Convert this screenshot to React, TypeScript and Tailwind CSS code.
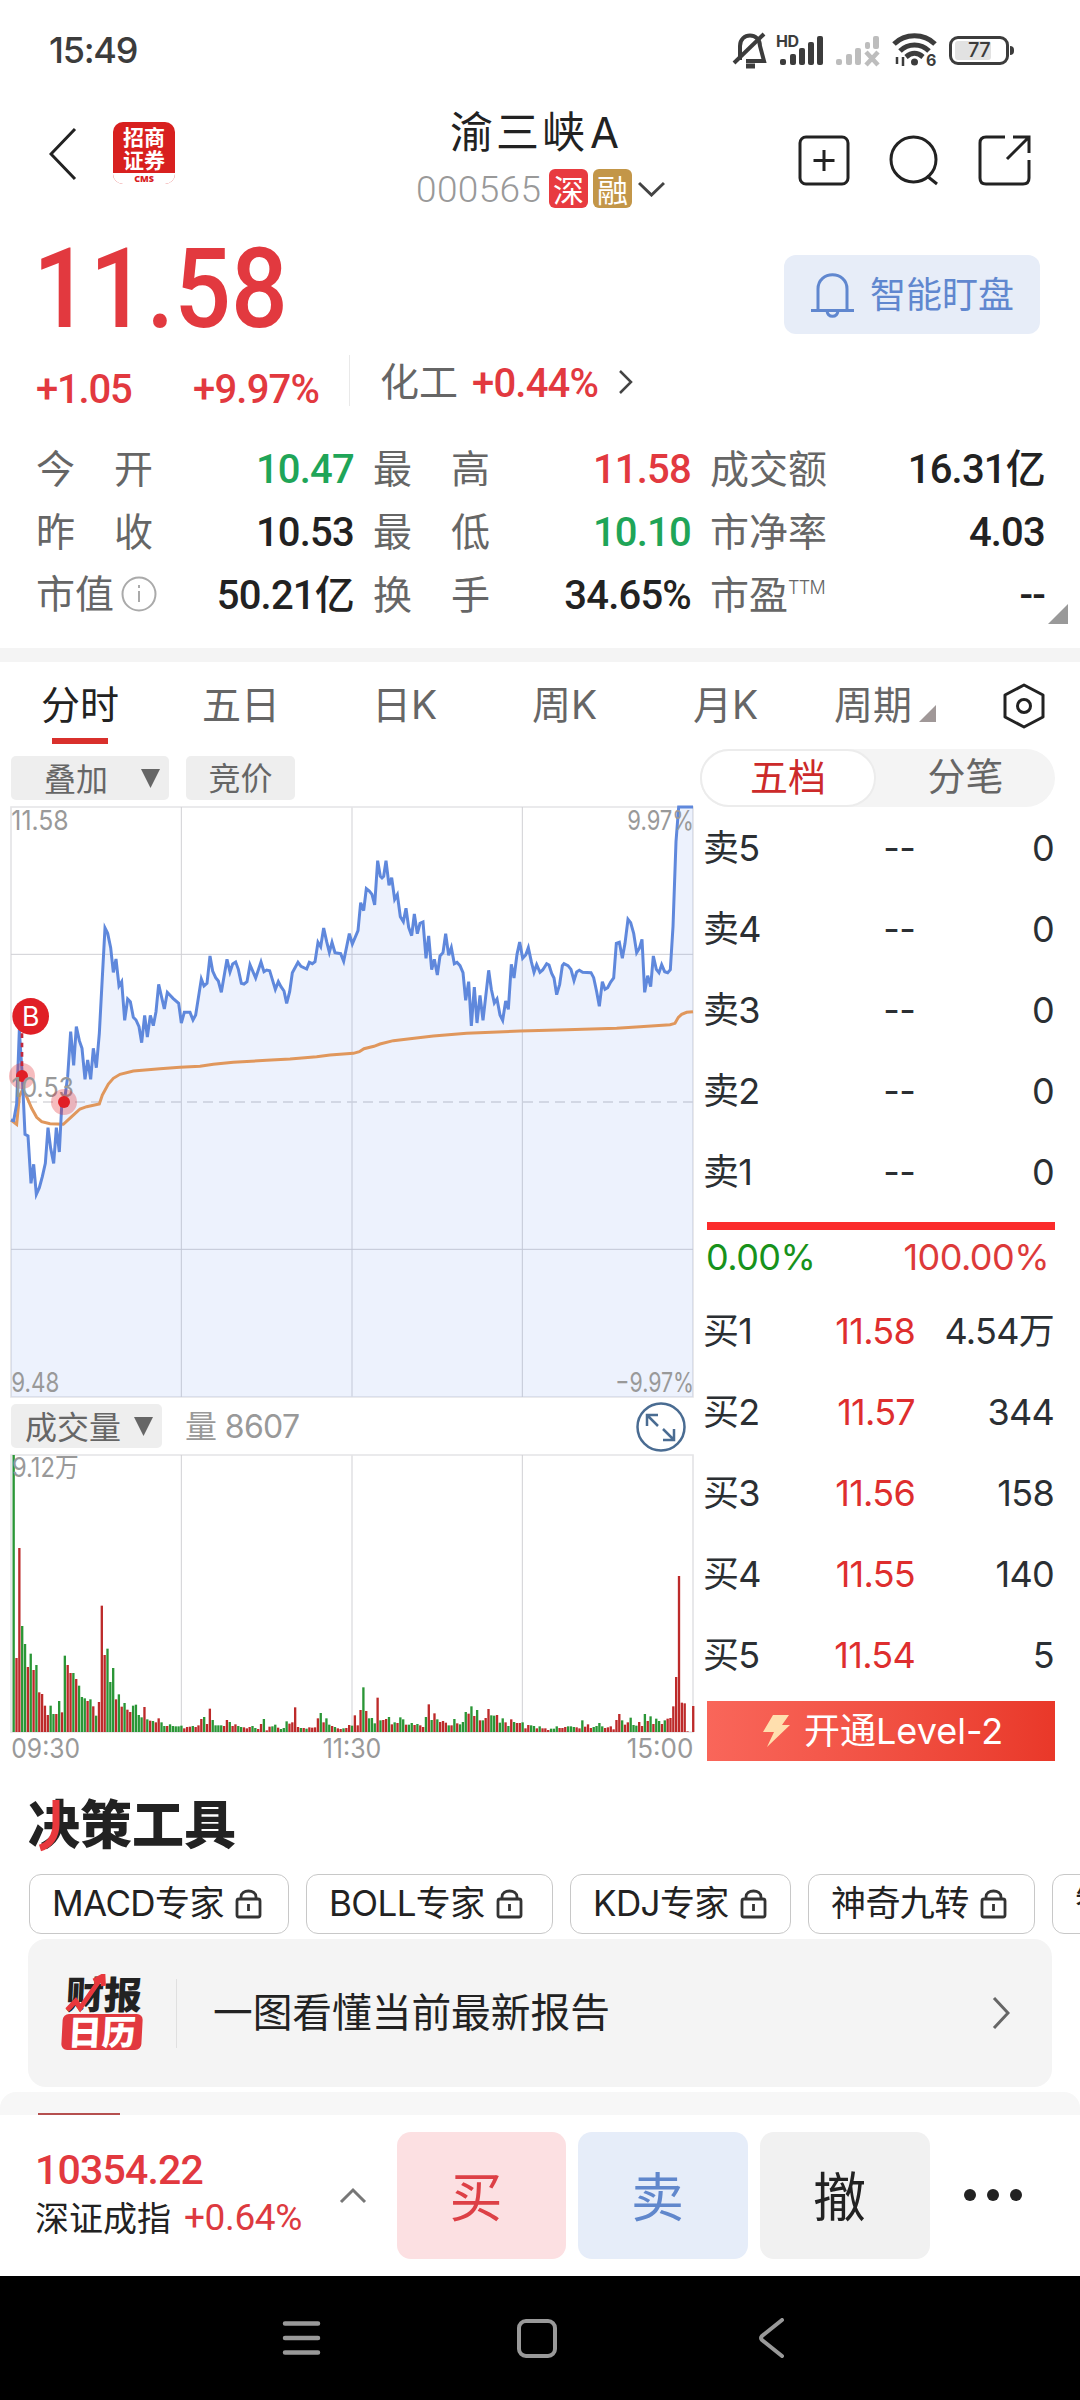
import type { ReactNode } from 'react';

const RED = 'text-[#e2393f]';
const GREEN = 'text-[#1fa558]';
const BLACK = 'text-[#222]';

// number styles: DIN-like for quotes, geometric for the order book
const DIN = "font-['Roboto','Noto_Sans_CJK_SC',sans-serif] font-medium";
const GEO = "font-['Inter','Noto_Sans_CJK_SC',sans-serif]";

const quotes = [
  [
    { label: '今开', value: '10.47', color: GREEN },
    { label: '昨收', value: '10.53', color: BLACK },
    { label: '市值', value: '50.21亿', color: BLACK, info: true },
  ],
  [
    { label: '最高', value: '11.58', color: RED },
    { label: '最低', value: '10.10', color: GREEN },
    { label: '换手', value: '34.65%', color: BLACK },
  ],
  [
    { label: '成交额', value: '16.31亿', color: BLACK },
    { label: '市净率', value: '4.03', color: BLACK },
    { label: '市盈', value: '--', color: BLACK, sup: 'TTM' },
  ],
];

const asks = ['卖5', '卖4', '卖3', '卖2', '卖1'];

const bids = [
  { label: '买1', price: '11.58', amount: '4.54万' },
  { label: '买2', price: '11.57', amount: '344' },
  { label: '买3', price: '11.56', amount: '158' },
  { label: '买4', price: '11.55', amount: '140' },
  { label: '买5', price: '11.54', amount: '5' },
];

// chart space: 3 units per pixel
const PRICE =
  '33,960 41,962 50,912 58,690 67,830 75,1003 84,1008 93,1150 101,1093 109,1183 118,1163 127,1130 136,1090 144,983 152,1045 161,1090 169,983 178,1056 186,900 195,890 203,830 212,695 221,796 229,680 238,722 246,745 255,838 263,780 272,838 280,745 289,803 298,700 306,550 315,384 323,400 332,443 340,517 348,477 357,558 365,545 374,661 383,597 391,605 400,652 408,660 417,680 425,728 434,646 442,711 451,646 460,677 468,635 476,553 493,627 502,577 519,595 536,610 544,669 553,637 570,637 579,660 587,645 604,537 612,558 621,550 630,468 638,513 647,533 655,543 664,577 681,478 690,516 698,492 707,486 715,508 724,550 732,552 741,545 750,494 767,534 783,486 792,515 800,510 809,512 826,568 835,545 843,560 852,573 860,610 869,575 877,518 894,487 903,499 920,507 928,487 937,491 945,485 954,427 962,440 971,384 980,425 988,457 996,427 1005,458 1022,461 1031,484 1048,401 1057,432 1074,392 ' +
  '1082,308 1091,332 1099,266 1108,273 1116,283 1124,315 1133,182 1141,229 1146,234 1151,229 1158,182 1167,256 1175,233 1184,298 1192,284 1201,350 1210,365 1218,325 1226,382 1235,407 1243,342 1252,401 1260,370 1269,366 1278,475 1286,408 1295,509 1303,478 1312,525 1320,468 1329,458 1337,401 1346,466 1354,443 1363,491 1371,487 1380,497 1389,518 1397,601 1406,545 1414,678 1423,561 1431,669 1440,586 1449,661 1466,511 1474,568 1483,609 1491,597 1500,645 1508,661 1517,603 1525,628 1534,493 1542,534 1551,463 1559,426 1568,475 1577,465 1585,443 1594,485 1602,517 1610,494 1620,517 1628,510 1640,491 1647,495 1655,520 1662,534 1670,584 1679,553 1687,497 1692,491 1704,497 1713,508 1722,542 1730,516 1738,511 1748,517 1773,518 1781,533 1790,575 1798,619 1807,545 1815,568 1823,563 1832,546 1841,534 1849,430 1858,427 1867,475 1875,430 1884,358 1892,368 1901,400 1910,458 1918,445 1926,418 1934,577 1943,527 1952,560 1960,468 1969,508 1977,518 1985,494 1994,515 2003,518 2011,509 2019,380 2028,125 2036,21 2079,21';

const AVERAGE =
  '33,960 50,973 58,890 67,870 80,890 95,925 110,952 125,965 150,971 190,973 215,950 240,927 260,920 298,912 307,885 325,852 340,835 360,823 400,813 480,806 540,802 600,799 640,793 700,787 800,781 870,777 950,770 990,765 1060,760 1078,755 1092,746 1122,739 1140,732 1180,722 1230,716 1300,708 1400,700 1560,693 1700,689 1850,685 1920,680 2010,674 2025,670 2035,652 2045,643 2060,637 2079,635';

// one entry per minute: direction and bar top
const VOLUME =
  'g45 r654 r324 g558 g612 r681 g641 r690 g675 r757 r762 r797 r825 g797 g822 r822 g783 r817 g647 r675 r699 g699 r717 g737 g771 g775 r783 g778 r799 g827 r786 r497 r645 g626 g726 g684 r778 g763 r800 g789 r809 r816 g797 g794 g825 g832 r801 g838 r842 g843 r847 r835 g847 g858 r858 g853 g858 g859 g859 g857 r865 r861 r860 g858 r861 r856 r837 g831 r852 r806 g840 g856 g856 g856 r858 r840 g846 r858 r853 g858 g861 r862 r865 r861 g858 g864 r867 r852 g837 r871 r860 g859 g854 r863 g867 g864 g844 r851 r847 r802 r861 g864 r864 g866 r862 r863 r862 r835 g819 r847 g835 g854 r858 g861 r865 r867 g865 r864 r855 g857 ' +
  'r826 r856 r810 g742 r813 g835 g834 g850 r773 g841 r840 r837 g831 r853 g847 r849 g832 g838 r854 g854 g849 r855 g852 r856 r861 g831 r793 g840 r820 g838 r846 r843 r848 g856 r856 g837 r850 g853 g846 g816 r821 g799 r828 g810 r841 g841 r834 r807 g826 g827 r825 g848 g835 r847 g858 r838 g846 r849 r849 g847 r865 r855 g856 g858 r865 g859 r865 r865 r870 g866 g866 g859 r864 r864 r861 g859 g859 g861 r862 r865 g841 r860 r853 r864 g861 g858 g849 g859 r864 r862 r859 r868 r840 r822 g841 r854 r847 g833 g855 g857 r846 r858 g822 r843 g829 r852 g836 g843 r852 g841 r836 r834 r799 r711 r408 r788 r790 r874 r876 r798';

function StatusBar() {
  return (
    <div className={`flex h-[100px] items-center justify-between pl-[49px] pr-[71px] text-[#3c3c3c] ${GEO}`}>
      <span className="mt-[-1px] text-[36px] font-medium tracking-[-0.035em]">15:49</span>
      <div className="flex items-center">
        <svg className="mr-[10px] h-10 w-9" viewBox="0 0 36 40" fill="none" stroke="currentColor" strokeWidth="4">
          <path d="M8 30 V16 C8 2 28 2 28 16 L32 31 H14" />
          <path d="M2 33 L32 4" />
          <path d="M14 36 H23" strokeWidth="5" />
        </svg>
        <svg className="mr-[11px] h-9 w-[46px]" viewBox="0 0 46 36" fill="currentColor" overflow="visible">
          <text x="-2" y="15" fontSize="16" fontWeight="700" textLength="23">HD</text>
          <rect x="2" y="27" width="6" height="6" rx="2" />
          <rect x="12" y="22" width="6" height="11" rx="2" />
          <rect x="21" y="16" width="6" height="17" rx="2" />
          <rect x="30" y="10" width="6" height="23" rx="2" />
          <rect x="39" y="4" width="6" height="29" rx="2" />
        </svg>
        <svg className="mr-[11px] h-9 w-[46px] text-[#bdbdbd]" viewBox="0 0 46 36" fill="currentColor">
          <rect x="1" y="27" width="6" height="6" rx="2" />
          <rect x="11" y="22" width="6" height="11" rx="2" />
          <rect x="20" y="16" width="6" height="17" rx="2" />
          <rect x="30" y="10" width="5" height="7" rx="2" />
          <rect x="38" y="4" width="6" height="13" rx="2" />
          <path d="M31 20 L43 33 M43 20 L31 33" stroke="currentColor" strokeWidth="4.500" />
        </svg>
        <svg className="mr-[11px] h-9 w-[46px]" viewBox="0 0 46 36" fill="none" stroke="currentColor" strokeWidth="5" overflow="visible">
          <path d="M2 12 C13 1 32 1 43 12" />
          <path d="M8 19 C16 11 29 11 37 19" />
          <path d="M14 25 C20 20 25 20 31 25" />
          <circle cx="22.500" cy="30" r="3.500" fill="currentColor" stroke="none" />
          <path d="M5 25 V32 M11 25 V34" strokeWidth="2.500" />
          <text x="34" y="34" fontSize="16" fontWeight="700" fill="currentColor" stroke="none">6</text>
        </svg>
        <div className="relative flex h-[29px] w-[60px] items-center rounded-[9px] border-[3px] border-current">
          <div className="ml-[3px] h-[19px] w-[36px] rounded-[3px] bg-[#e2e2e2]" />
          <span className="absolute inset-x-0 text-center text-[20px] font-medium leading-none tracking-[-0.03em]">77</span>
          <i className="absolute -right-[8px] h-[9px] w-[4px] rounded-r bg-current" />
        </div>
      </div>
    </div>
  );
}

function Header() {
  return (
    <header className="flex h-[124px] items-start">
      <svg className="ml-[49px] mt-[27px] h-[54px] w-7" viewBox="0 0 28 54" fill="none" stroke="#222" strokeWidth="3">
        <path d="M26 2 L2 27 L26 52" />
      </svg>
      <div className="ml-9 mt-[22px] flex h-[62px] w-[62px] flex-col items-center overflow-hidden rounded-[10px] bg-[#d8201f] pt-[3px] font-bold text-white">
        <span className="h-[23px] text-[21px] leading-[23px]">招商</span>
        <span className="h-[25px] text-[21px] leading-[23px]">证券</span>
        <span className="flex h-[11px] w-full items-center justify-center bg-white font-['Open_Sans'] text-[9px] font-extrabold leading-none text-[#d8201f]">
          CMS
        </span>
      </div>
      <div className="ml-[241px] flex w-[250px] flex-col">
        <div className="ml-[34px] mt-[2px] text-[43px] leading-[54px] tracking-[3px] text-[#222]">
          渝三峡<span className={`ml-[2px] ${GEO} text-[42px]`}>A</span>
        </div>
        <div className="mt-[9px] flex h-[39px] items-center">
          <span className="mr-[5px] mt-[2px] w-[128px] font-['Roboto'] text-[37px] font-light leading-none tracking-[0.01em] text-[#999]">000565</span>
          <span className="mr-[5px] flex h-[39px] w-[39px] items-center justify-center rounded-[6px] bg-[#e83b40] text-[31px] leading-none text-white">深</span>
          <span className="flex h-[39px] w-[39px] items-center justify-center rounded-[6px] bg-[#c39648] text-[31px] leading-none text-white">融</span>
          <svg className="ml-[6px] h-4 w-[27px] shrink-0" viewBox="0 0 27 16" fill="none" stroke="#444" strokeWidth="3">
            <path d="M1 2 L13.500 14 L26 2" />
          </svg>
        </div>
      </div>
      <div className="ml-[132px] mt-[34px] flex">
        <svg className="h-[54px] w-[52px]" viewBox="0 0 52 54" fill="none" stroke="#222" strokeWidth="3">
          <rect x="2" y="3" width="48" height="47" rx="6" />
          <path d="M26 16 V37 M15.500 26.500 H36.500" />
        </svg>
        <svg className="ml-[38px] h-[54px] w-[52px]" viewBox="0 0 52 54" fill="none" stroke="#222" strokeWidth="3">
          <circle cx="25.500" cy="25.500" r="22.500" />
          <path d="M39 42 L49 50" />
        </svg>
        <svg className="ml-[38px] h-[54px] w-[53px]" viewBox="0 0 53 54" fill="none" stroke="#222" strokeWidth="3">
          <path d="M27 3 H8 Q2 3 2 9 V44 Q2 50 8 50 H45 Q51 50 51 44 V26" />
          <path d="M35 3 H51 V19 M51 3 L29 25" />
        </svg>
      </div>
    </header>
  );
}

function PriceBlock() {
  return (
    <section>
      <div className="flex h-[124px] justify-between pl-[33px] pr-10">
        <span className={`${DIN} ${RED} mt-[10px] origin-left scale-x-[.9] text-[111px] leading-[111px]`}>11.58</span>
        <button className="mt-[31px] flex h-[79px] w-[256px] items-center rounded-xl bg-[#e7edf8] pl-[26px] text-[#6087cf]">
          <svg className="mr-[15px] h-[46px] w-[45px]" viewBox="0 0 45 46" fill="none" stroke="currentColor" strokeWidth="3">
            <path d="M8 38 V17 C8 -2 37 -2 37 17 V38" />
            <path d="M1 38.500 H44 M17 39 C18 46 27 46 28 39" />
          </svg>
          <span className="mt-[-5px] text-[36px] leading-none">智能盯盘</span>
        </button>
      </div>
      <div className="flex h-[89px] items-start">
        <span className={`${DIN} ${RED} ml-[36px] mt-[21px] w-[157px] text-[40px] leading-[42px] tracking-[-0.03em]`}>+1.05</span>
        <span className={`${DIN} ${RED} mt-[21px] w-[156px] text-[40px] leading-[42px] tracking-[-0.02em]`}>+9.97%</span>
        <div className="mt-[7px] h-[51px] w-px bg-[#e9e9e9]" />
        <span className="ml-[30px] mt-[10px] text-[39px] leading-[42px] text-[#666]">化工</span>
        <span className={`${DIN} ${RED} ml-[14px] mt-[15px] w-[130px] text-[40px] leading-[42px] tracking-[-0.02em]`}>+0.44%</span>
        <svg className="ml-4 mt-[22px] h-6 w-[15px]" viewBox="0 0 15 24" fill="none" stroke="#444" strokeWidth="2.500">
          <path d="M2 1 L13 12 L2 23" />
        </svg>
      </div>
      <div className="relative flex h-[211px] gap-[19px] pl-[36px] pr-[35px]">
        {quotes.map((col, i) => (
          <div key={i} className={i === 2 ? 'flex-1' : 'w-[318px]'}>
            {col.map((q) => (
              <div key={q.label} className="flex h-[63px] items-center justify-between">
                <div className={`mt-[-5px] flex text-[39px] leading-none text-[#666] ${q.info || q.sup ? '' : 'w-[117px] justify-between'}`}>
                  {q.info || q.sup ? q.label : q.label.split('').map((c) => <span key={c}>{c}</span>)}
                  {q.info && (
                    <svg className="ml-[7px] mt-[4px] h-9 w-9" viewBox="0 0 36 36" fill="none" stroke="#aaa" strokeWidth="2">
                      <circle cx="18" cy="18" r="16.500" />
                      <path d="M18 15 V26 M18 9 V12" />
                    </svg>
                  )}
                  {q.sup && <sup className={`${GEO} top-0 text-[18px] font-light leading-[30px] tracking-[-0.04em]`}>{q.sup}</sup>}
                </div>
                <span className={`${DIN} ${q.color} mt-[2px] text-[40px] leading-none tracking-[-0.02em]`}>{q.value}</span>
              </div>
            ))}
          </div>
        ))}
        <svg className="absolute bottom-[24px] right-[12px] h-5 w-5" viewBox="0 0 20 20" fill="#999">
          <path d="M20 0 V20 H0 Z" />
        </svg>
      </div>
    </section>
  );
}

function Tabs() {
  return (
    <nav className={`flex h-[87px] items-start pt-[16px] text-[39px] leading-[54px] text-[#666] ${GEO}`}>
      <div className="ml-[41px] flex w-[161px] flex-col text-[#222]">
        分时
        <i className="ml-[11px] mt-[6px] h-[6px] w-[56px] bg-[#d9302c]" />
      </div>
      <span className="w-[170px]">五日</span>
      <span className="w-[160px]">日K</span>
      <span className="w-[161px]">周K</span>
      <span className="w-[141px]">月K</span>
      <span className="w-[85px]">周期</span>
      <svg className="mt-[27px] h-[17px] w-[17px]" viewBox="0 0 17 17" fill="#a09898">
        <path d="M17 0 V17 H0 Z" />
      </svg>
      <svg className="ml-[67px] mt-[5px] h-[46px] w-[42px]" viewBox="0 0 42 46" fill="none" stroke="#222" strokeWidth="3">
        <path d="M21 2 L40 12 V34 L21 44 L2 34 V12 Z" strokeLinejoin="round" />
        <circle cx="21" cy="23" r="6.500" />
      </svg>
    </nav>
  );
}

function Grid({ bottom }: { bottom: number }) {
  return (
    <g fill="none" stroke="#d0d0d4" strokeWidth="3">
      <path d={`M33 21 H2079 V${bottom} H33 Z`} stroke="#e4e4e6" strokeWidth="5" />
      <path d={`M1056 21 V${bottom}`} stroke="#e4e4e6" strokeWidth="5" />
      <path d={`M544 21 V${bottom} M1567 21 V${bottom}`} />
    </g>
  );
}

function PriceChart() {
  return (
    <svg className="h-[600px] w-[693px] shrink-0" viewBox="0 6 2079 1800" overflow="visible" fontFamily="Inter, 'Noto Sans CJK SC', sans-serif">
      <Grid bottom={1791} />
      <path d="M33 463 H2079 M33 1348 H2079" stroke="#cfcfd4" strokeWidth="3" />
      <path d="M33 906 H2079" stroke="#d8d8dc" strokeWidth="5" strokeDasharray="30 18" />
      <polygon points={`33,1791 ${PRICE} 2079,1791`} fill="#4f7df0" fillOpacity=".1" />
      <polyline points={AVERAGE} fill="none" stroke="#e0975c" strokeWidth="9" />
      <polyline points={PRICE} fill="none" stroke="#5f88dc" strokeWidth="9" />
      <path d="M66 700 V828" stroke="#c2283c" strokeWidth="8" strokeDasharray="14 14" />
      <circle cx="66" cy="828" r="39" fill="#e02128" fillOpacity=".3" />
      <circle cx="66" cy="828" r="18" fill="#e01f26" />
      <g fill="#999" fontSize="82">
        <text x="34" y="90" textLength="172" lengthAdjust="spacingAndGlyphs">11.58</text>
        <text x="1882" y="90" textLength="200" lengthAdjust="spacingAndGlyphs">9.97%</text>
        <text x="34" y="892" textLength="188" lengthAdjust="spacingAndGlyphs">10.53</text>
        <text x="34" y="1775" textLength="144" lengthAdjust="spacingAndGlyphs">9.48</text>
        <text x="1846" y="1775" textLength="236" lengthAdjust="spacingAndGlyphs">−9.97%</text>
      </g>
      <circle cx="192" cy="906" r="39" fill="#e02128" fillOpacity=".3" />
      <circle cx="192" cy="906" r="18" fill="#e01f26" />
      <circle cx="92" cy="649" r="55" fill="#e01f26" />
      <text x="92" y="678" fontSize="80" fill="#fff" textAnchor="middle">B</text>
    </svg>
  );
}

function VolumeChart() {
  return (
    <svg className="h-[315px] w-[693px] shrink-0" viewBox="0 21 2079 945" overflow="visible" fontFamily="Inter, 'Noto Sans CJK SC', sans-serif">
      <g transform="translate(0 24)">
        <Grid bottom={852} />
      </g>
      {VOLUME.split(' ').map((v, i) => {
        const top = Number(v.slice(1));
        return (
          <rect key={i} x={37.5 + i * 8.53} y={top} width="7" height={876 - top} fill={v[0] === 'g' ? '#2a9636' : '#bd2a2a'} />
        );
      })}
      <g fill="#999" fontSize="82">
        <text x="36" y="112" textLength="200" lengthAdjust="spacingAndGlyphs">9.12万</text>
        <text x="34" y="953" textLength="206" lengthAdjust="spacingAndGlyphs">09:30</text>
        <text x="968" y="953" textLength="176" lengthAdjust="spacingAndGlyphs">11:30</text>
        <text x="1880" y="953" textLength="200" lengthAdjust="spacingAndGlyphs">15:00</text>
      </g>
    </svg>
  );
}

function Caret() {
  return (
    <svg className="h-[19px] w-[19px]" viewBox="0 0 19 19" fill="#666">
      <path d="M0 0 H19 L9.500 19 Z" />
    </svg>
  );
}

function Charts() {
  return (
    <div className="flex w-[693px] flex-col">
      <div className="ml-[11px] mt-[7px] flex h-[46px] shrink-0 text-[32px] leading-[40px] text-[#666]">
        <div className="mr-[17px] flex h-11 w-[158px] items-center justify-between rounded-[5px] bg-[#eee] pl-[33px] pr-[9px]">
          <span className="mt-[-3px]">叠加</span>
          <Caret />
        </div>
        <div className="flex h-11 w-[109px] justify-center rounded-[5px] bg-[#eee]">竞价</div>
      </div>
      <PriceChart />
      <div className="ml-[11px] mr-[7px] mt-[2px] flex h-[43px] shrink-0 items-start text-[32px] leading-[42px]">
        <div className="mr-[23px] flex h-11 w-[151px] items-center justify-between rounded-[5px] bg-[#eee] pl-[14px] pr-[9px] text-[#666]">
          <span className="mt-[-3px]">成交量</span>
          <Caret />
        </div>
        <span className={`${GEO} mt-[2px] tracking-[-0.02em] text-[#999]`}>量 8607</span>
        <svg className="ml-auto mt-[-2px] h-[50px] w-[50px]" viewBox="0 0 50 50" fill="none" stroke="#4a6c92" strokeWidth="2.500">
          <circle cx="25" cy="25" r="23.500" />
          <path d="M11 24 V13 H22 M11.500 13.500 L22 24" />
          <path d="M38 27 V38 H27 M37.500 37.500 L27 27" />
        </svg>
      </div>
      <VolumeChart />
    </div>
  );
}

function BookRow({ label, price, amount, red }: { label: string; price: string; amount: string; red?: boolean }) {
  return (
    <div className="flex h-[80.8px] items-center text-[36px] leading-none tracking-[-0.02em] text-[#2b2f33]">
      <span className="w-[80px]">{label}</span>
      <span className={`w-[132px] text-right ${red ? 'text-[#de2e2e]' : ''}`}>{price}</span>
      <span className="flex-1 text-right">{amount}</span>
    </div>
  );
}

function OrderBook() {
  return (
    <aside className={`ml-[7px] w-[355px] ${GEO}`}>
      <div className="flex h-[58px] rounded-full bg-[#f4f4f4] text-[38px] leading-[55px] text-[#666]">
        <span className="w-[176px] rounded-full border-2 border-[#ececec] bg-white text-center leading-[52px] text-[#cc2a2a]">五档</span>
        <span className="flex-1 text-center">分笔</span>
      </div>
      <div className="ml-[3px] mr-px mt-[1px]">
        {asks.map((label) => (
          <BookRow key={label} label={label} price="--" amount="0" />
        ))}
      </div>
      <div className="ml-[7px] mt-[10px] h-[8px] bg-[#fb2b2b]" />
      <div className="ml-[6px] mr-[6px] flex h-[61px] justify-between pt-[5px] text-[36px] leading-[44px] tracking-[-0.015em]">
        <span className="text-[#17921b]">0.00%</span>
        <span className="text-[#dd3a3a]">100.00%</span>
      </div>
      <div className="ml-[3px] mr-px">
        {bids.map((b) => (
          <BookRow key={b.label} {...b} red />
        ))}
      </div>
      <button className="ml-[7px] mt-[6px] flex h-[60px] w-[348px] items-center bg-linear-to-r from-[#f9665a] to-[#e93829] pl-[55px] text-[36px] leading-none text-white">
        <svg className="mr-[14px] h-8 w-7" viewBox="0 0 28 32" fill="#ffdfae">
          <path d="M11 0 H27 L20 10 H28 L5 32 L12 17 H1 Z" />
        </svg>
        <span>开通Level-2</span>
      </button>
    </aside>
  );
}

function LockIcon() {
  return (
    <svg className="ml-[11px] h-[30px] w-[27px]" viewBox="0 0 27 30" fill="none" stroke="#333" strokeWidth="2.800">
      <rect x="2" y="10" width="23" height="18" rx="2" />
      <path d="M6 10 V8 C6 0 21 0 21 8 V10 M13.500 15 V22" />
    </svg>
  );
}

function ToolChip({ width, children }: { width: string; children: ReactNode }) {
  return (
    <div className={`flex h-[60px] shrink-0 items-center rounded-xl border border-[#c8c8c8] pl-[22px] text-[35px] leading-none text-[#222] ${GEO} ${width}`}>
      <span className="mt-[-1px] whitespace-nowrap tracking-[-0.017em]">{children}</span>
      <LockIcon />
    </div>
  );
}

function Tools() {
  return (
    <section className="h-[353px] overflow-hidden">
      <div className="relative ml-[28px] mt-[26px] h-[74px] text-[52px] font-black leading-[68px] text-[#222]">
        决策工具
        <svg className="absolute left-[8px] top-[10px] h-[54px] w-8" viewBox="0 0 32 54" fill="none" stroke="#e8383d" strokeWidth="7">
          <path d="M20 2 V26 C20 38 14 47 4 50" />
        </svg>
      </div>
      <div className="ml-[29px] mt-[12px] flex gap-[17px]">
        <ToolChip width="w-[260px]">MACD专家</ToolChip>
        <ToolChip width="w-[247px]">BOLL专家</ToolChip>
        <ToolChip width="w-[221px]">KDJ专家</ToolChip>
        <ToolChip width="w-[227px]">神奇九转</ToolChip>
        <ToolChip width="w-[227px]">智能选股</ToolChip>
      </div>
      <div className="mx-7 mt-[5px] flex h-[148px] items-center rounded-[18px] bg-[#f4f4f4] pl-[35px] pr-[42px]">
        <div className="relative w-[80px] -skew-x-3 font-black">
          <div className="h-[38px] pl-[2px] text-[38px] leading-[34px] text-[#222]">财报</div>
          <div className="h-[36px] rounded-[6px] bg-[#e2393f] text-center text-[34px] leading-[33px] text-white">日历</div>
          <svg className="absolute left-0 top-[-2px] h-10 w-[44px]" viewBox="0 0 44 40" fill="none" stroke="#e8383d" strokeWidth="5">
            <path d="M4 36 L12 27 L17 34 L37 3 M29 7 L38 2 L39 12" />
          </svg>
        </div>
        <div className="ml-[33px] mr-[36px] h-[69px] w-px bg-[#e0e0e0]" />
        <span className="mt-[-7px] text-[39.700px] leading-none text-[#222]">一图看懂当前最新报告</span>
        <svg className="ml-auto h-8 w-[18px]" viewBox="0 0 18 32" fill="none" stroke="#666" strokeWidth="3">
          <path d="M2 1 L16 16 L2 31" />
        </svg>
      </div>
      <div className="mt-[5px] h-[23px] rounded-t-2xl bg-[#f7f7f7] pt-[21px]">
        <div className="ml-[38px] h-[2px] w-[82px] bg-[#b5504f]" />
      </div>
    </section>
  );
}

function TradeBar() {
  return (
    <footer className="flex h-[161px] items-start bg-white pl-[35px] pt-[17px]">
      <div className="w-[303px]">
        <div className={`${DIN} ${RED} mt-[16px] text-[41px] leading-[44px] tracking-[-0.02em]`}>10354.22</div>
        <div className="mt-[1px] flex items-center text-[34px] leading-[46px] text-[#222]">
          深证成指
          <span className="ml-[13px] mt-[2px] font-['Roboto'] text-[37px] font-normal tracking-[-0.01em] text-[#dd3a40]">+0.64%</span>
        </div>
      </div>
      <svg className="mt-[54px] h-[18px] w-[30px]" viewBox="0 0 30 18" fill="none" stroke="#777" strokeWidth="3">
        <path d="M3 16 L15 4 L27 16" />
      </svg>
      <div className="ml-[29px] flex gap-3 text-[53px] leading-none">
        <button className="h-[127px] w-[169px] rounded-[14px] bg-[#fce0e2] pb-[2px] pr-[11px] text-[#dd4046]">买</button>
        <button className="h-[127px] w-[170px] rounded-[14px] bg-[#e6edf9] pb-[2px] pr-[11px] text-[#6087cc]">卖</button>
        <button className="h-[127px] w-[170px] rounded-[14px] bg-[#f1f1f1] pb-[2px] pr-[11px] text-[#222]">撤</button>
      </div>
      <div className="ml-[34px] mt-[57px] flex gap-[11px]">
        <i className="h-3 w-3 rounded-full bg-[#222]" />
        <i className="h-3 w-3 rounded-full bg-[#222]" />
        <i className="h-3 w-3 rounded-full bg-[#222]" />
      </div>
    </footer>
  );
}

function SystemNav() {
  return (
    <div className="flex h-[124px] items-center bg-black">
      <svg className="ml-[282px] h-10 w-10" viewBox="0 0 40 40" stroke="#999" strokeWidth="4.500" strokeLinecap="round">
        <path d="M3 5.500 H36 M3 20 H36 M3 34.500 H36" />
      </svg>
      <div className="ml-[195px] h-[39px] w-[40px] rounded-[9px] border-[4px] border-[#999]" />
      <svg className="ml-[200px] h-10 w-7" viewBox="0 0 28 40" fill="none" stroke="#999" strokeWidth="4" strokeLinecap="round" strokeLinejoin="round">
        <path d="M25 2 L5 18 Q3 20 5 22 L25 38" />
      </svg>
    </div>
  );
}

export default function App() {
  return (
    <main className="h-[2400px] w-[1080px] overflow-hidden bg-white font-['Noto_Sans_CJK_SC',sans-serif]">
      <StatusBar />
      <Header />
      <PriceBlock />
      <div className="h-[14px] bg-[#f4f4f4]" />
      <Tabs />
      <div className="flex h-[1013px]">
        <Charts />
        <OrderBook />
      </div>
      <Tools />
      <TradeBar />
      <SystemNav />
    </main>
  );
}
